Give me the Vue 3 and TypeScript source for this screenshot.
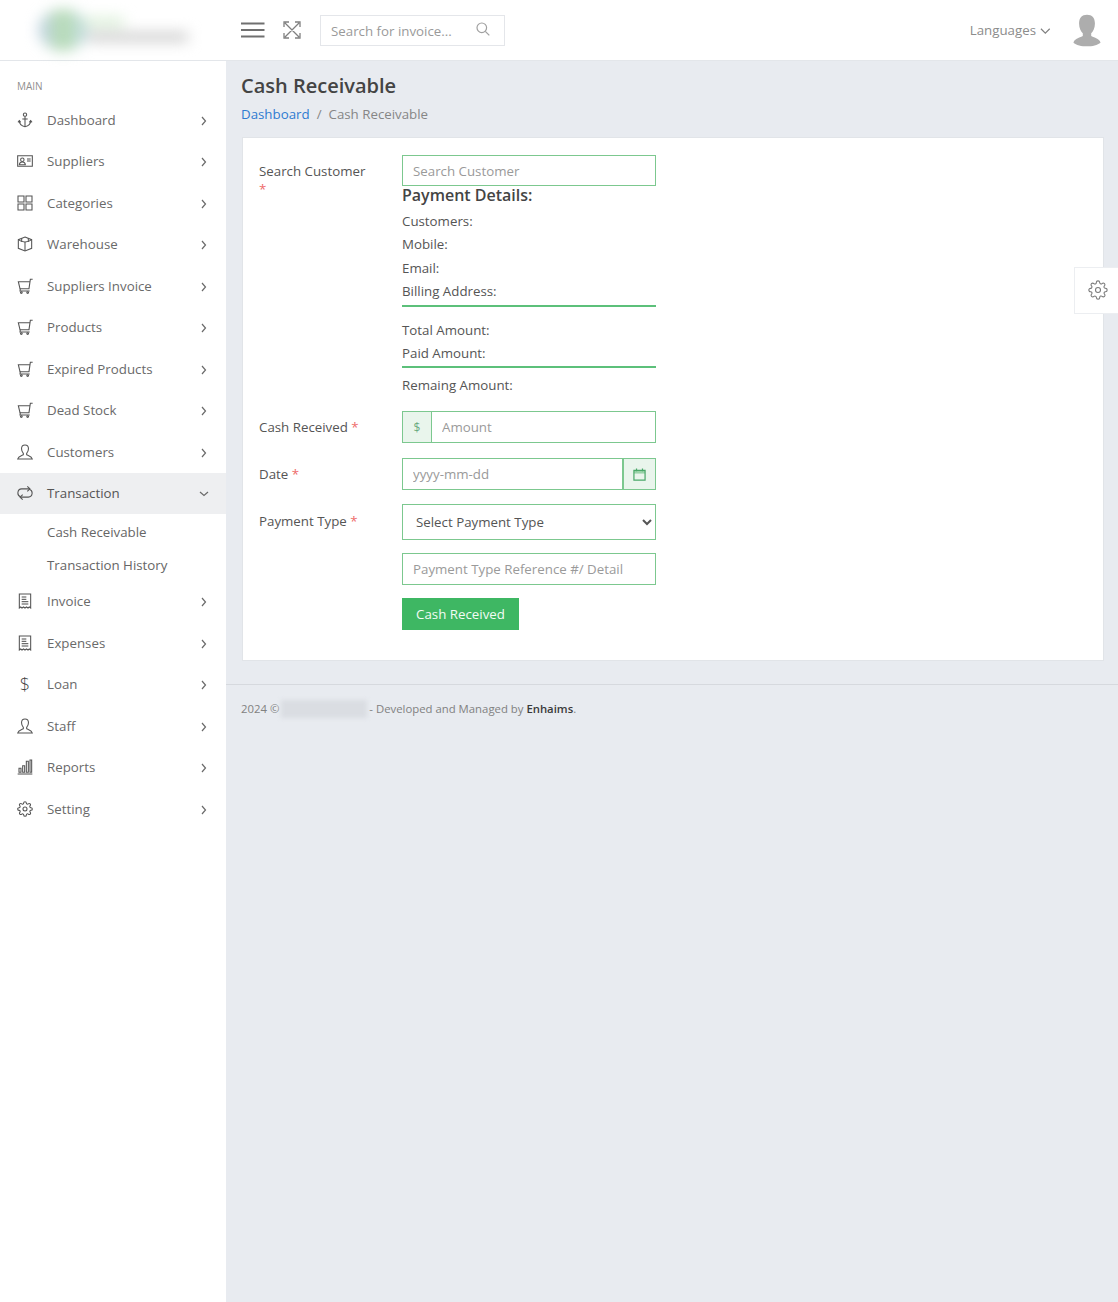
<script setup lang="ts">
interface MenuItem {
  label: string
  icon: string
  open?: boolean
  children?: string[]
}

const gearPath =
  'M19.4 15a1.65 1.65 0 0 0 .33 1.82l.06.06a2 2 0 0 1 0 2.83 2 2 0 0 1-2.83 0l-.06-.06a1.65 1.65 0 0 0-1.82-.33 1.65 1.65 0 0 0-1 1.51V21a2 2 0 0 1-2 2 2 2 0 0 1-2-2v-.09A1.65 1.65 0 0 0 9 19.4a1.65 1.65 0 0 0-1.82.33l-.06.06a2 2 0 0 1-2.83 0 2 2 0 0 1 0-2.83l.06-.06a1.65 1.65 0 0 0 .33-1.82 1.65 1.65 0 0 0-1.51-1H3a2 2 0 0 1-2-2 2 2 0 0 1 2-2h.09A1.65 1.65 0 0 0 4.6 9a1.65 1.65 0 0 0-.33-1.82l-.06-.06a2 2 0 0 1 0-2.83 2 2 0 0 1 2.83 0l.06.06a1.65 1.65 0 0 0 1.82.33H9a1.65 1.65 0 0 0 1-1.51V3a2 2 0 0 1 2-2 2 2 0 0 1 2 2v.09a1.65 1.65 0 0 0 1 1.51 1.65 1.65 0 0 0 1.82-.33l.06-.06a2 2 0 0 1 2.83 0 2 2 0 0 1 0 2.83l-.06.06a1.65 1.65 0 0 0-.33 1.82V9a1.65 1.65 0 0 0 1.51 1H21a2 2 0 0 1 2 2 2 2 0 0 1-2 2h-.09a1.65 1.65 0 0 0-1.51 1zM15 12a3 3 0 1 1-6 0 3 3 0 0 1 6 0z'

const icons: Record<string, string[]> = {
  anchor: ['M12 7v15', 'M12 1.500a2.500 2.500 0 1 1 0 5 2.500 2.500 0 0 1 0-5z', 'M8 10.500h8', 'M3.500 13c0 5 4 8 8.500 9 4.500-1 8.500-4 8.500-9', 'M1.500 15.500 3.500 13l2 2.500', 'M18.500 15.500l2-2.500 2 2.500'],
  card: ['M1 4h22v16H1z', 'M8 7.500a2.600 2.600 0 1 1 0 5.200A2.600 2.600 0 0 1 8 7.500z', 'M3.500 17.500c.3-3 2-4 4.500-4s4.200 1 4.500 4z', 'M15 9h5.500', 'M15 12h5.500'],
  grid: ['M1.500 1.500h9v9h-9z', 'M13.500 1.500h9v9h-9z', 'M1.500 13.500h9v9h-9z', 'M13.500 13.500h9v9h-9z'],
  box: ['M12 1.500 22 5.500v13l-10 4-10-4v-13z', 'M2 5.500c3 2.500 7 3.500 10 3.500s7-1 10-3.500', 'M12 9v13.500', 'M7 3.500v5', 'M17 3.500v5'],
  cart: ['M23.500 2h-3.500l-2 14H4.500L2 5.500h17', 'M5 16l-.5 3.500h14.500', 'M6.500 20.500a1.300 1.300 0 1 1 0 2.600 1.300 1.300 0 0 1 0-2.600z', 'M16 20.500a1.300 1.300 0 1 1 0 2.600 1.300 1.300 0 0 1 0-2.600z'],
  user: ['M12 1.500c3.300 0 5.200 2.500 5.200 5.800 0 3-1.500 5.500-2.700 6.700v2.200c2.500 1.500 7.500 2 8.500 6.300H1c1-4.300 6-4.800 8.500-6.300V14C8.300 12.800 6.800 10.300 6.800 7.300c0-3.300 1.900-5.800 5.200-5.800z'],
  repeat: ['M5.500 17.500A6 6 0 0 1 7 5.800h12', 'M15.500 2l3.800 3.800-3.800 3.800', 'M18.500 6.500A6 6 0 0 1 17 18.200H5', 'M8.500 14.500l-3.800 3.700 3.800 3.800'],
  receipt: ['M3.500 22.500V1.500h17v21l-2-1.500-2 1.500-2.200-1.500-2.300 1.500-2.200-1.500-2.300 1.500-2-1.500z', 'M7 6h7', 'M7 9.500h7', 'M7 13h10', 'M7 16.500h10'],
  chart: ['M1 22.500h22', 'M3 20v-6h3v6z', 'M8.500 20V10h3v10z', 'M14 20V3.500h3V20z', 'M19.500 20V1.500h2.500V20z'],
  gear: [gearPath],
}

const menu: MenuItem[] = [
  { label: 'Dashboard', icon: 'anchor' },
  { label: 'Suppliers', icon: 'card' },
  { label: 'Categories', icon: 'grid' },
  { label: 'Warehouse', icon: 'box' },
  { label: 'Suppliers Invoice', icon: 'cart' },
  { label: 'Products', icon: 'cart' },
  { label: 'Expired Products', icon: 'cart' },
  { label: 'Dead Stock', icon: 'cart' },
  { label: 'Customers', icon: 'user' },
  { label: 'Transaction', icon: 'repeat', open: true, children: ['Cash Receivable', 'Transaction History'] },
  { label: 'Invoice', icon: 'receipt' },
  { label: 'Expenses', icon: 'receipt' },
  { label: 'Loan', icon: 'dollar' },
  { label: 'Staff', icon: 'user' },
  { label: 'Reports', icon: 'chart' },
  { label: 'Setting', icon: 'gear' },
]
</script>

<template>
  <div class="app">
    <header class="topbar">
      <div class="brand">
        <div class="logo">
          <span class="logo-mark"></span>
          <span class="logo-strip"></span>
          <span class="logo-text"></span>
        </div>
      </div>
      <div class="topbar-main">
        <div class="topbar-left">
          <svg class="burger" viewBox="0 0 24 16" width="24" height="16" aria-hidden="true">
            <path d="M0 1.500h23.500M0 8h23.500M0 14.500h23.500" />
          </svg>
          <svg class="expand" viewBox="0 0 18 18" width="18" height="18" aria-hidden="true">
            <path d="M2 2l14 14M16 2 2 16M1 6V1h5M12 1h5v5M1 12v5h5M17 12v5h-5" />
          </svg>
          <div class="top-search">
            <input class="top-search-input" type="text" placeholder="Search for invoice..." />
            <svg viewBox="0 0 14 14" width="14" height="14" aria-hidden="true">
              <circle cx="5.800" cy="5.800" r="4.800" />
              <path d="m9.300 9.300 4 4" />
            </svg>
          </div>
        </div>
        <div class="topbar-right">
          <span class="languages">
            Languages
            <svg viewBox="0 0 12 8" width="11" height="8" aria-hidden="true"><path d="m1 1.500 4.800 4.800L10.600 1.500" /></svg>
          </span>
          <svg class="avatar" viewBox="0 0 30 34" width="28" height="33" aria-hidden="true">
            <path d="M15 0c5.500 0 8.500 3.500 8.500 9.500 0 5-2 8.500-4 10.500v3c2 1.500 9 2.500 10 7-3 2.500-9 4-14.500 4S3 32.500.5 30c1-4.500 8-5.500 10-7v-3c-2-2-4-5.500-4-10.500C6.500 3.500 9.500 0 15 0z" />
          </svg>
        </div>
      </div>
    </header>

    <div class="body">
      <aside class="sidebar">
        <div class="menu-title">MAIN</div>
        <nav>
          <template v-for="item in menu" :key="item.label">
            <a class="menu-item" :class="{ active: item.open }">
              <span class="menu-icon">
                <span v-if="item.icon === 'dollar'" class="dollar">$</span>
                <svg v-else viewBox="0 0 24 24" width="16" height="16" aria-hidden="true">
                  <path v-for="d in icons[item.icon]" :key="d" :d="d" />
                </svg>
              </span>
              <span class="menu-label">{{ item.label }}</span>
              <svg class="chevron" viewBox="0 0 8 10" :class="{ down: item.open }" width="8" height="10" aria-hidden="true">
                <path d="m2 1 3.500 4L2 9" />
              </svg>
            </a>
            <div v-if="item.children" class="submenu">
              <a v-for="child in item.children" :key="child" class="sub-item">{{ child }}</a>
            </div>
          </template>
        </nav>
      </aside>

      <main class="content">
        <div class="page-head">
          <h1>Cash Receivable</h1>
          <div class="crumbs">
            <a>Dashboard</a>
            <span class="sep">/</span>
            <span>Cash Receivable</span>
          </div>
        </div>

        <section class="card">
          <div class="form-row first">
            <label class="lbl wrap">Search Customer <span class="req">*</span></label>
            <div class="field">
              <input class="ctl search-ctl" type="text" placeholder="Search Customer" />
              <h2>Payment Details:</h2>
              <div class="info">
                <p>Customers:</p>
                <p>Mobile:</p>
                <p>Email:</p>
                <p>Billing Address:</p>
              </div>
              <hr />
              <div class="info second">
                <p>Total Amount:</p>
                <p>Paid Amount:</p>
              </div>
              <hr class="tight" />
              <div class="info third">
                <p>Remaing Amount:</p>
              </div>
            </div>
          </div>

          <div class="form-row amount">
            <label class="lbl">Cash Received <span class="req">*</span></label>
            <div class="field group">
              <span class="addon dollar-addon">$</span>
              <input class="ctl in-group" type="text" placeholder="Amount" />
            </div>
          </div>

          <div class="form-row date">
            <label class="lbl">Date <span class="req">*</span></label>
            <div class="field group">
              <input class="ctl in-group" type="text" placeholder="yyyy-mm-dd" />
              <span class="addon cal-addon">
                <svg viewBox="0 0 14 14" width="13" height="13" aria-hidden="true">
                  <path class="band" d="M1 2.500h12V6H1z" />
                  <path d="M1 2.500h12V13H1z" />
                  <path d="M3.800 .5v3M10.200 .5v3" />
                </svg>
              </span>
            </div>
          </div>

          <div class="form-row pay">
            <label class="lbl">Payment Type <span class="req">*</span></label>
            <div class="field">
              <select class="ctl sel">
                <option>Select Payment Type</option>
              </select>
              <input class="ctl ref" type="text" placeholder="Payment Type Reference #/ Detail" />
              <button class="btn" type="button">Cash Received</button>
            </div>
          </div>
        </section>

        <footer class="foot">
          <span>2024 ©</span>
          <span class="blurred"></span>
          <span>- Developed and Managed by <b>Enhaims</b>.</span>
        </footer>
      </main>
    </div>

    <aside class="settings-tab">
      <svg viewBox="0 0 24 24" width="20" height="20" aria-hidden="true">
        <path :d="gearPath" />
      </svg>
    </aside>
  </div>
</template>

<style>
html,
body {
  margin: 0;
  background: #e8ebf0;
}
</style>

<style scoped>
* {
  box-sizing: border-box;
}
.app {
  position: relative;
  min-height: 1302px;
  display: flex;
  flex-direction: column;
  font-family: "Open Sans", "Liberation Sans", sans-serif;
  font-size: 13.3px;
  color: #555;
  background: #e8ebf0;
}
.topbar {
  height: 61px;
  display: flex;
  background: #fff;
  border-bottom: 1px solid #e3e6ea;
}
.brand {
  width: 226px;
  flex: none;
  display: flex;
  align-items: center;
  padding-left: 38px;
}
.logo {
  position: relative;
  width: 152px;
  height: 48px;
  display: flex;
  align-items: center;
  filter: blur(7px);
}
.logo-mark {
  width: 50px;
  height: 42px;
  border-radius: 50%;
  background: linear-gradient(90deg, #c4d3ea 0%, #b6dcb2 50%, #c6dcea 100%);
}
.logo-strip {
  position: absolute;
  left: 46px;
  top: 11px;
  width: 40px;
  height: 10px;
  background: #ddf0da;
}
.logo-text {
  width: 100px;
  height: 10px;
  margin-top: 14px;
  background: #d0d0d0;
}
.topbar-main {
  flex: 1;
  display: flex;
  align-items: center;
  justify-content: space-between;
  padding: 0 17px 0 15px;
}
.topbar-left {
  display: flex;
  align-items: center;
}
.burger path {
  fill: none;
  stroke: #707070;
  stroke-width: 2;
}
.expand {
  margin-left: 18px;
}
.expand path {
  fill: none;
  stroke: #808080;
  stroke-width: 1.300;
}
.top-search {
  margin-left: 19px;
  width: 185px;
  height: 31px;
  margin-top: 1px;
  display: flex;
  align-items: center;
  padding: 0 14px 0 10px;
  border: 1px solid #e4e6ea;
}
.top-search-input {
  flex: 1;
  min-width: 0;
  border: 0;
  outline: 0;
  padding: 0;
  font: inherit;
  color: #555;
}
.top-search-input::placeholder {
  color: #9a9a9a;
  opacity: 1;
}
.top-search svg {
  flex: none;
  margin-top: -3px;
}
.top-search svg circle,
.top-search svg path {
  fill: none;
  stroke: #a0a0a0;
  stroke-width: 1.200;
}
.topbar-right {
  display: flex;
  align-items: center;
}
.languages {
  display: flex;
  align-items: center;
  gap: 4px;
  color: #8c8c8c;
}
.languages svg {
  margin-top: 2px;
}
.languages svg path {
  fill: none;
  stroke: #808080;
  stroke-width: 1.300;
}
.avatar {
  margin-left: 22px;
}
.avatar path {
  fill: #adadad;
}
.body {
  flex: 1;
  display: flex;
}
.sidebar {
  width: 226px;
  flex: none;
  background: #fff;
  padding-top: 16px;
}
.menu-title {
  padding-left: 17px;
  height: 22px;
  font-size: 10px;
  line-height: 18px;
  color: #8f8f8f;
}
.menu-item {
  height: 41.500px;
  display: flex;
  align-items: center;
  padding: 0 17px;
  color: #6a6a6a;
}
.menu-item.active {
  background: #eeeff1;
  color: #555;
}
.menu-icon {
  width: 30px;
  flex: none;
  display: flex;
  align-items: center;
}
.menu-icon svg path {
  fill: none;
  stroke: #555;
  stroke-width: 1.600;
}
.dollar {
  width: 16px;
  text-align: center;
  font-size: 18px;
  font-weight: 300;
  line-height: 18px;
  color: #444;
}
.menu-label {
  flex: 1;
}
.chevron path {
  fill: none;
  stroke: #6a6a6a;
  stroke-width: 1.200;
}
.chevron {
  margin-right: 1px;
  margin-top: 2px;
}
.chevron.down {
  transform: rotate(90deg);
}
.submenu {
  height: 66.500px;
  padding-top: 1px;
}
.sub-item {
  display: flex;
  align-items: center;
  height: 33px;
  padding-left: 47px;
  color: #666;
}
.content {
  flex: 1;
  min-width: 0;
  display: flex;
  flex-direction: column;
}
.page-head {
  padding: 11px 15px 0;
  height: 76px;
}
h1 {
  margin: 0;
  font-size: 20px;
  line-height: 28px;
  font-weight: 600;
  color: #444;
}
.crumbs {
  display: flex;
  gap: 7px;
  margin-top: 3px;
  line-height: 22px;
  color: #868686;
}
.crumbs a {
  color: #2f7bd1;
}
.card {
  margin: 0 14px 0 16px;
  height: 524px;
  padding: 17px 16px 0;
  background: #fff;
  border: 1px solid #e1e4e8;
}
.form-row {
  display: grid;
  grid-template-columns: 143px 254px;
}
.lbl {
  line-height: 20px;
  color: #555;
}
.lbl.wrap {
  display: block;
  width: 112px;
  padding-top: 7px;
  line-height: 18px;
}
.req {
  color: #ee6b6b;
}
.ctl {
  display: block;
  width: 100%;
  height: 32px;
  border: 1px solid #7cc88f;
  border-radius: 0;
  outline: 0;
  padding: 0 10px;
  background: #fff;
  font: inherit;
  color: #555;
}
.ctl::placeholder {
  color: #9a9a9a;
  opacity: 1;
}
.search-ctl {
  height: 31px;
}
h2 {
  margin: 0;
  height: 18px;
  font-size: 16px;
  line-height: 18px;
  font-weight: 600;
  color: #444;
}
.info {
  padding-top: 6px;
}
.info p {
  margin: 0;
  height: 23.300px;
  line-height: 23.300px;
  color: #555;
}
.info.second {
  padding-top: 12px;
}
.info.third {
  padding-top: 6px;
}
hr {
  margin: 2px 0 0;
  border: 0;
  height: 2px;
  background: #5cc07a;
}
hr.tight {
  margin-top: 0;
}
.amount {
  margin-top: 14px;
  align-items: center;
}
.date {
  margin-top: 15px;
  align-items: center;
}
.pay {
  margin-top: 14px;
}
.pay .lbl {
  padding-top: 7px;
}
.group {
  display: flex;
}
.in-group {
  flex: 1;
  min-width: 0;
}
.addon {
  flex: none;
  height: 32px;
  display: flex;
  align-items: center;
  justify-content: center;
  background: #e9f5ec;
  border: 1px solid #7cc88f;
  color: #6bab7f;
  font-size: 12px;
}
.dollar-addon {
  width: 29px;
  border-right: 0;
}
.cal-addon {
  width: 33px;
  border-left: 0;
  box-shadow: inset 1px 0 0 #7cc88f;
}
.cal-addon svg path {
  fill: none;
  stroke: #4aa868;
  stroke-width: 1.300;
}
.cal-addon svg path.band {
  fill: #9ad3a9;
  stroke: none;
}
.sel {
  height: 36px;
  padding-left: 9px;
  color: #555;
}
.ref {
  margin-top: 13px;
}
.btn {
  display: block;
  margin-top: 13px;
  width: 117px;
  height: 32px;
  padding: 0;
  border: 0;
  border-radius: 0;
  background: #3eb763;
  color: #f2fbf4;
  font: inherit;
}
.foot {
  margin-top: 23px;
  padding: 14px 15px 0;
  display: flex;
  align-items: flex-start;
  gap: 2px;
  border-top: 1px solid #d6d9de;
  font-size: 11.350px;
  line-height: 20px;
  color: #818181;
}
.foot b {
  font-weight: 600;
  color: #3a3a3a;
}
.blurred {
  width: 86px;
  height: 18px;
  margin-top: 1px;
  background: #dadde2;
  filter: blur(2px);
}
.settings-tab {
  position: absolute;
  top: 267px;
  right: 0;
  width: 44px;
  height: 47px;
  display: flex;
  align-items: center;
  padding-left: 13px;
  padding-bottom: 2px;
  background: #fff;
  border: 1px solid #eceef1;
  border-right: 0;
}
.settings-tab svg path {
  fill: none;
  stroke: #7a7a7a;
  stroke-width: 1.300;
}
</style>
